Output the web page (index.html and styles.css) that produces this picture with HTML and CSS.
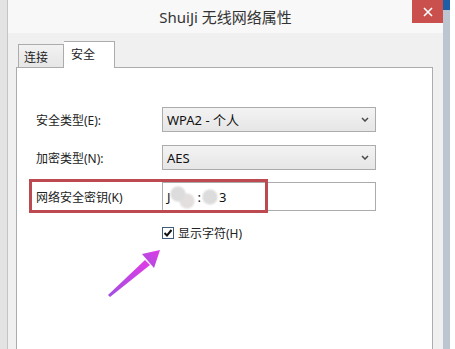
FILE: index.html
```html
<!DOCTYPE html>
<html lang="zh-CN">
<head>
  <meta charset="UTF-8">
  <meta name="viewport" content="width=device-width, initial-scale=1.0">
  <title>ShuiJi 无线网络属性</title>
  <link rel="stylesheet" href="styles.css">
</head>
<body>
  <div class="screen">
    <div class="edge-left"></div>

    <div class="window">
      <div class="titlebar">
        <span class="title">ShuiJi 无线网络属性</span>
        <div class="close">
          <svg width="10" height="10" viewBox="0 0 10 10">
            <path d="M1 1 L9 9 M9 1 L1 9" stroke="#fff" stroke-width="1.6" fill="none"/>
          </svg>
        </div>
      </div>

      <div class="body">
        <div class="tabs">
          <div class="tab">连接</div>
          <div class="tab active">安全</div>
        </div>

        <div class="panel">
          <div class="row">
            <label class="field-label">安全类型(E):</label>
            <div class="select">
              <span>WPA2 - 个人</span>
              <svg class="chevron" width="8" height="5" viewBox="0 0 8 5">
                <path d="M1 1 L4 4 L7 1" stroke="#4a4a4a" stroke-width="1.5" fill="none"/>
              </svg>
            </div>
          </div>

          <div class="row">
            <label class="field-label">加密类型(N):</label>
            <div class="select">
              <span>AES</span>
              <svg class="chevron" width="8" height="5" viewBox="0 0 8 5">
                <path d="M1 1 L4 4 L7 1" stroke="#4a4a4a" stroke-width="1.5" fill="none"/>
              </svg>
            </div>
          </div>

          <div class="row row-key">
            <label class="field-label">网络安全密钥(K)</label>
            <div class="textbox">
              <span>J</span>
              <span class="smudge smudge-pair"></span>
              <span class="colon">:</span>
              <span class="smudge"></span>
              <span>3</span>
            </div>
          </div>

          <div class="check-row">
            <span class="checkbox">
              <svg width="10" height="10" viewBox="0 0 10 10">
                <path d="M1.5 5 L4 7.5 L8.5 2" stroke="#111" stroke-width="2" fill="none"/>
              </svg>
            </span>
            <span>显示字符(H)</span>
          </div>

          <!-- annotation overlays -->
          <div class="highlight"></div>
          <svg class="pointer" width="70" height="65" viewBox="0 0 70 65">
            <defs>
              <linearGradient id="arrowFill" x1="0" y1="1" x2="1" y2="0">
                <stop offset="0" stop-color="#a24fe0"/>
                <stop offset="1" stop-color="#e23be6"/>
              </linearGradient>
            </defs>
            <polygon points="8,55 45,20 50,25 10,57" fill="url(#arrowFill)"/>
            <polygon points="42,14 60,10 54,28" fill="url(#arrowFill)"/>
          </svg>
        </div>
      </div>
    </div>

    <div class="edge-right">
      <div class="edge-accent"></div>
    </div>
  </div>
</body>
</html>
```

FILE: styles.css
```css
* {
  margin: 0;
  padding: 0;
  box-sizing: border-box;
}

body {
  background-color: #ffffff;
  font-family: "Noto Sans", "Noto Sans CJK SC", sans-serif;
  font-size: 12px;
  color: #1a1a1a;
}

.screen {
  display: flex;
  width: 455px;
  height: 349px;
  overflow: hidden;
  background-color: #ffffff;
}

.edge-left {
  width: 8px;
  background-color: #e3e3e3;
  border-right: 1px solid #c4c4c4;
}

.window {
  width: 435px;
  display: flex;
  flex-direction: column;
  background-color: #f0f0f0;
}

.titlebar {
  height: 33px;
  display: grid;
  grid-template-columns: 1fr auto 1fr;
  background-color: #f8f8f8;
}

.title {
  grid-column: 2;
  align-self: center;
  font-size: 15px;
  color: #333;
  padding-bottom: 1px;
}

.close {
  grid-column: 3;
  justify-self: end;
  width: 31px;
  height: 23px;
  background-color: #c9504d;
  display: flex;
  align-items: center;
  justify-content: center;
}

.body {
  flex: 1;
  display: flex;
  flex-direction: column;
  padding: 0 10px 0 8px;
}

.tabs {
  height: 34px;
  display: flex;
  align-items: flex-end;
  padding-left: 2px;
}

.tab {
  height: 23px;
  width: 46px;
  padding-left: 5px;
  line-height: 26px;
  border: 1px solid #acacac;
  border-bottom: none;
  background: linear-gradient(#f2f2f2, #e6e6e6);
  color: #222;
}

.tab.active {
  height: 27px;
  width: 51px;
  padding-left: 7px;
  line-height: 26px;
  margin-bottom: -1px;
  border-left: none;
  background: #ffffff;
  position: relative;
  z-index: 1;
}

.panel {
  flex: 1;
  position: relative;
  background-color: #ffffff;
  border: 1px solid #acacac;
  border-bottom: none;
  padding: 39px 0 0 19px;
}

.row {
  display: flex;
  align-items: center;
  height: 25px;
  margin-bottom: 13px;
}

.row + .row {
  margin-bottom: 12px;
}

.field-label {
  width: 126px;
  color: #222;
}

.select {
  width: 214px;
  height: 100%;
  display: flex;
  align-items: center;
  justify-content: space-between;
  padding: 0 6px 0 4px;
  border: 1px solid #acacac;
  background: linear-gradient(#f3f3f3, #e6e6e6);
  font-size: 13px;
  color: #111;
}

.row-key {
  height: 29px;
}

.textbox {
  width: 214px;
  height: 100%;
  display: flex;
  align-items: center;
  padding-left: 4px;
  border: 1px solid #ababab;
  background-color: #ffffff;
  font-size: 13px;
  color: #111;
}

.smudge {
  width: 17px;
  height: 20px;
  background: radial-gradient(circle at 8px 10px, #dddcdc 6px, rgba(230, 230, 230, 0) 9px);
}

.smudge-pair {
  width: 30px;
  height: 26px;
  margin-left: -3px;
  background:
    radial-gradient(circle at 10px 10px, #dcdcdc 6px, rgba(230, 230, 230, 0) 9px),
    radial-gradient(circle at 19px 17px, #e3dfdf 6px, rgba(230, 230, 230, 0) 9px);
}

.colon {
  margin: 0 1px 0 0;
}

.check-row {
  display: flex;
  align-items: center;
  gap: 4px;
  margin: 16px 0 0 126px;
  height: 12px;
  color: #222;
}

.checkbox {
  width: 12px;
  height: 12px;
  border: 1px solid #3f5b78;
  display: flex;
  align-items: center;
  justify-content: center;
  background-color: #ffffff;
}

.highlight {
  position: absolute;
  left: 12px;
  top: 111px;
  width: 239px;
  height: 34px;
  border: 3px solid #bd4a50;
}

.pointer {
  position: absolute;
  left: 83px;
  top: 172px;
}

.edge-right {
  width: 7px;
  background-color: #bcc6d1;
}

.edge-accent {
  height: 10px;
  background-color: #1d5ea6;
}
```
